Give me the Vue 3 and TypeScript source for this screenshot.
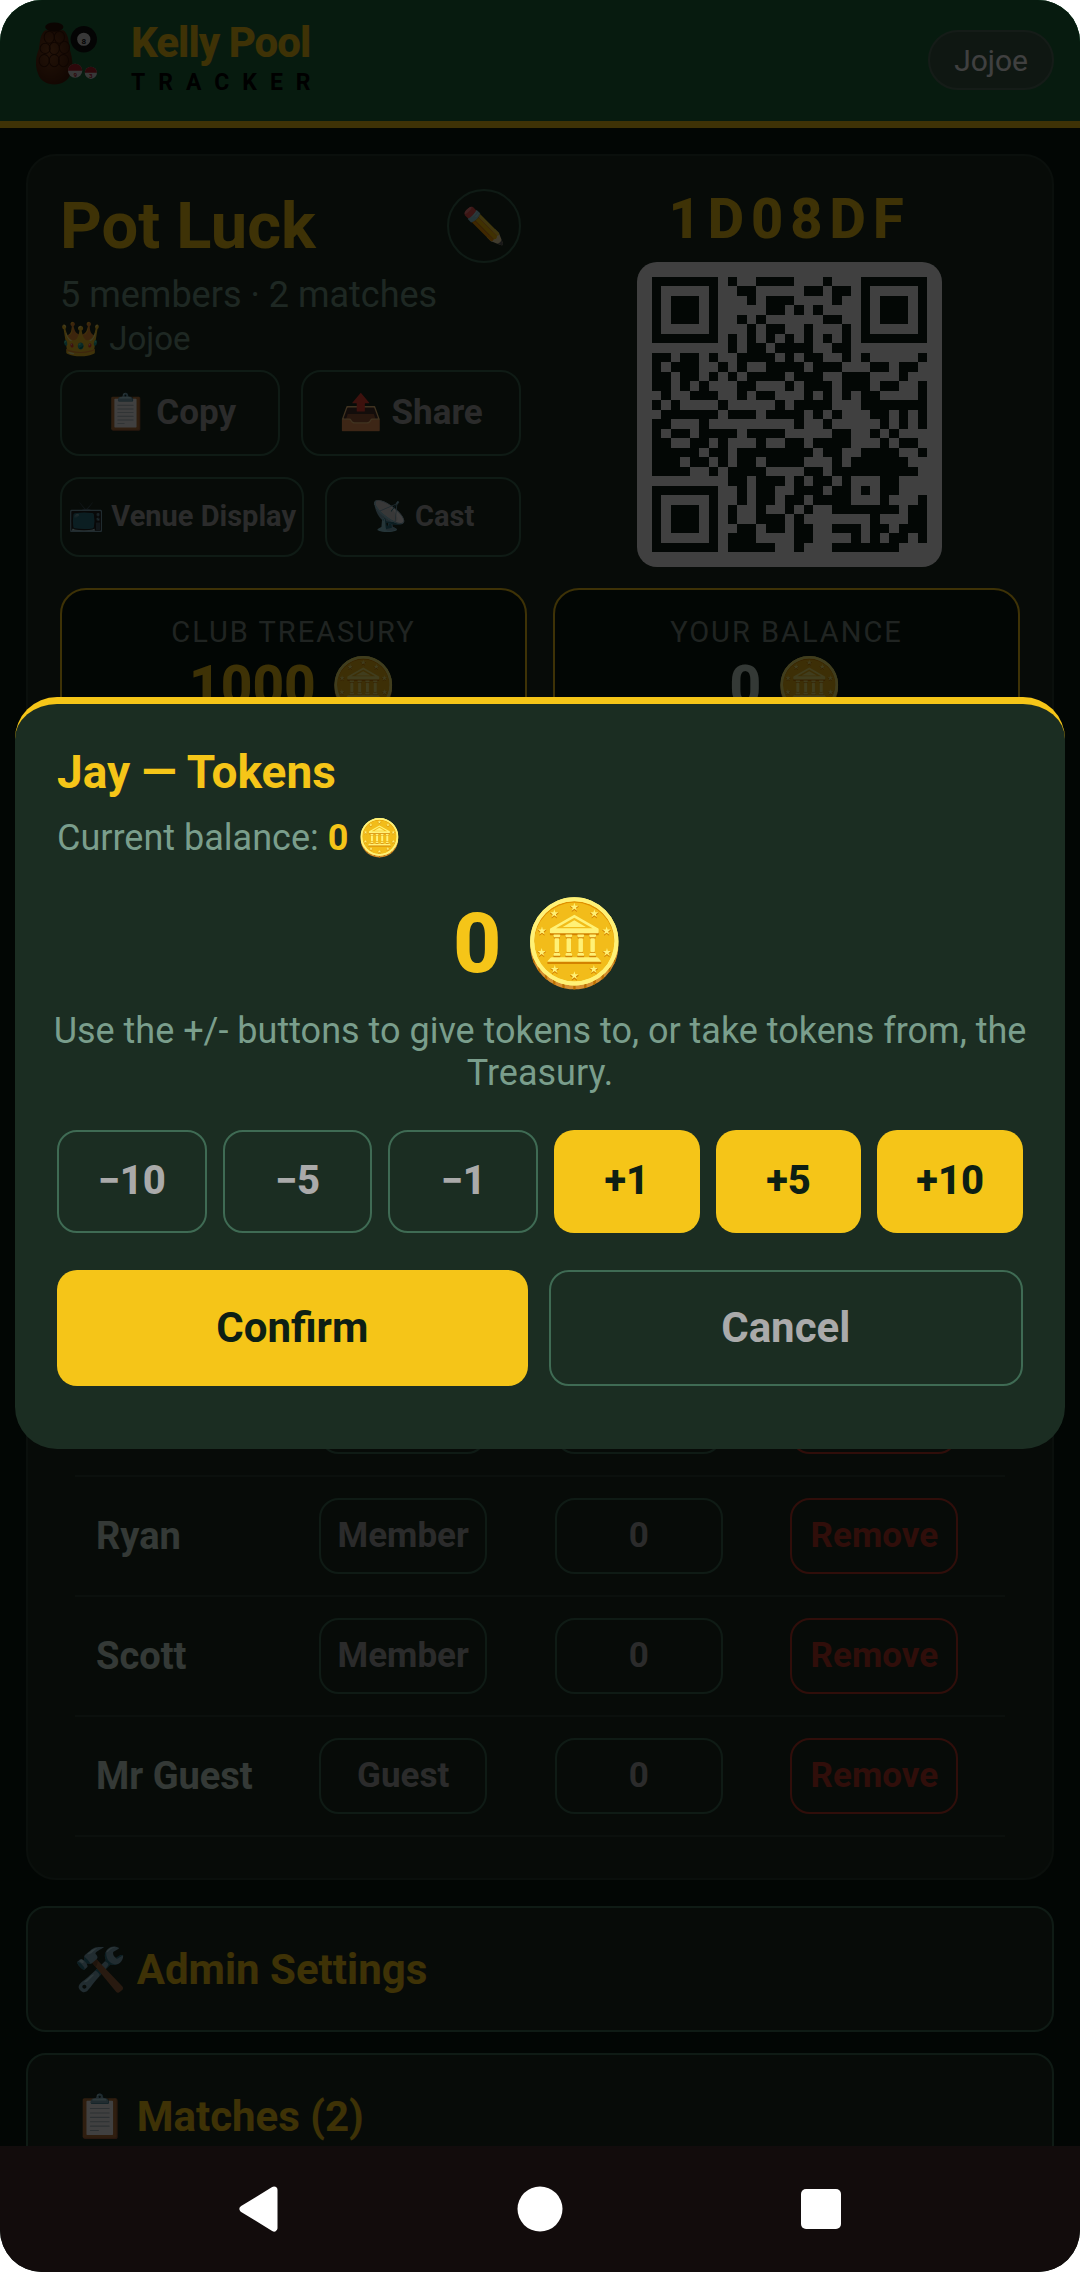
<script setup lang="ts">
import { computed, ref } from 'vue'

interface Member {
  name: string
  role: string
  tokens: number
}

const members: Member[] = [
  { name: 'Jay', role: 'Member', tokens: 0 },
  { name: 'Ryan', role: 'Member', tokens: 0 },
  { name: 'Scott', role: 'Member', tokens: 0 },
  { name: 'Mr Guest', role: 'Guest', tokens: 0 },
]

const balance = ref(0)
const change = ref(0)
const steps = [-10, -5, -1, 1, 5, 10]
const label = (n: number): string => (n < 0 ? `−${-n}` : `+${n}`)

// Dark modules of the join code, one entry per row, as column runs.
const qrRows: string[] = [
  '8 11-14 18', '9-10 16-17 19-20', '10 12-14 19', '12-13 15 17', '9 11 18-19',
  '10 12-13 16 20', '8 10 12 14 16 18 20', '8 10-11 13-16 19-20',
  '0-1 3-4 6 9-12 14 16-17 20 22 28', '0 2-4 7 9 12-15 17-19 23-24 26-27',
  '0-1 3-4 6 8 10-13 15-17 20-22 26', '0-1 3 5 9-10 14 16-18 20-22 24-25 28',
  '1 4-6 9 11-12 16 18 20 22-23 28', '0 2 7 13 15-18 22-28',
  '1-6 8-10 12-15 17 19 23-24 26 28', '0-1 5 15 18 24 26 28',
  '0 2-3 5-8 10-13 19-20 23 25', '0-1 4-5 7 11 14-15 17-20 24 26-27',
  '0-4 6-7 9-16 18-19 22-25 28', '0-2 4-5 7 9-10 12-15 19 21-26',
  '0-3 6 8-11 16-17 19-27', '8-9 11-13 15 17-18 20 24-25',
  '9 11-12 15-17 19-20 22 24-25', '9 11-12 14-15 17-20 24 28',
  '8 11 14 16 19-25 27-28', '8 11-13 15 23 27-28', '9-10 12-13 15-16 19-21 23-24 26-28',
  '8-10 15-16 21 23 25-26 28', '8-12 15 19-25',
]
const qrPath = computed(() =>
  qrRows
    .flatMap((row, y) =>
      row.split(' ').map((run) => {
        const [from, to = from] = run.split('-').map(Number)
        const width = to - from + 1
        return `M${from} ${y}h${width}v1h-${width}z`
      }),
    )
    .join(''),
)
const finders = [[0, 0], [22, 0], [0, 22]]
</script>

<template>
  <div class="screen">
    <div class="viewport">
      <header class="topbar">
        <div class="brand">
          <svg class="logo" viewBox="0 0 60 63" aria-hidden="true">
            <defs>
              <radialGradient id="gourd" cx=".4" cy=".4" r=".65">
                <stop offset="0" stop-color="#8a4a20" />
                <stop offset="1" stop-color="#4a1c08" />
              </radialGradient>
            </defs>
            <path d="M9 8C4 12 4 18 3 26C-1 35-1 44 2 51C6 65 30 65 34 51C37 43 36 36 33 26C32 18 32 12 27 8z" fill="url(#gourd)" />
            <ellipse cx="18" cy="5" rx="9" ry="4.500" fill="#2c1006" />
            <g fill="none" stroke="#3e1606">
              <ellipse cx="13" cy="15" rx="5" ry="6" /><ellipse cx="23" cy="15" rx="5" ry="6" />
              <ellipse cx="9" cy="26" rx="5" ry="5" /><ellipse cx="18" cy="26" rx="5" ry="6" /><ellipse cx="28" cy="25" rx="5" ry="6" />
              <ellipse cx="8" cy="38" rx="5" ry="6" /><ellipse cx="18" cy="38" rx="5" ry="6" /><ellipse cx="27" cy="38" rx="5" ry="6" />
            </g>
            <circle cx="47" cy="17" r="13" fill="#111" />
            <circle cx="47" cy="17" r="6.500" fill="#ddd" />
            <text x="47" y="22" text-anchor="middle" font-size="8" font-weight="700" fill="#111">8</text>
            <circle cx="38.500" cy="48" r="7" fill="#ddd" /><path d="M31.500 48a7 7 0 0 1 14 0z" fill="#b3202c" />
            <circle cx="54" cy="50" r="6" fill="#ddd" /><path d="M48 50a6 6 0 0 1 12 0z" fill="#b3202c" />
            <text x="38.500" y="54" text-anchor="middle" font-size="6" font-weight="700" fill="#b3202c">9</text>
            <text x="54" y="55" text-anchor="middle" font-size="6" font-weight="700" fill="#b3202c">3</text>
          </svg>
          <div class="wordmark">
            <span class="brand-name">Kelly Pool</span>
            <span class="brand-sub">TRACKER</span>
          </div>
        </div>
        <button class="user">Jojoe</button>
      </header>

      <main class="content">
        <section class="card">
          <div class="club">
            <div class="club-info">
              <div class="club-head">
                <h1>Pot Luck</h1>
                <button class="edit" aria-label="Edit">✏️</button>
              </div>
              <p class="stats">5 members · 2 matches</p>
              <p class="owner">👑 Jojoe</p>
              <div class="actions">
                <button class="outline">📋 Copy</button>
                <button class="outline">📤 Share</button>
              </div>
              <div class="actions small">
                <button class="outline venue">📺 Venue Display</button>
                <button class="outline cast">📡 Cast</button>
              </div>
            </div>
            <div class="join">
              <p class="code">1D08DF</p>
              <div class="qr">
                <svg viewBox="0 0 29 29" shape-rendering="crispEdges" role="img">
                  <g v-for="([x, y], i) in finders" :key="i" fill="#0d1f14">
                    <path :d="`M${x} ${y}h7v7h-7zM${x + 1} ${y + 1}v5h5v-5z`" fill-rule="evenodd" />
                    <rect :x="x + 2" :y="y + 2" width="3" height="3" />
                  </g>
                  <path :d="qrPath" fill="#0d1f14" />
                </svg>
              </div>
            </div>
          </div>

          <div class="tiles">
            <div class="tile">
              <span class="tile-label">CLUB TREASURY</span>
              <span class="tile-value gold">1000 🪙</span>
            </div>
            <div class="tile">
              <span class="tile-label">YOUR BALANCE</span>
              <span class="tile-value">0 🪙</span>
            </div>
          </div>

          <table class="members">
            <tbody>
              <tr v-for="m in members" :key="m.name">
                <th scope="row">{{ m.name }}</th>
                <td><button class="outline cell">{{ m.role }}</button></td>
                <td><button class="outline cell">{{ m.tokens }}</button></td>
                <td><button class="outline cell danger">Remove</button></td>
              </tr>
            </tbody>
          </table>
        </section>

        <button class="fold">🛠️ Admin Settings</button>
        <button class="fold">📋 Matches (2)</button>
      </main>

      <div class="overlay">
        <div class="modal" role="dialog" aria-modal="true" aria-labelledby="dlg">
          <h2 id="dlg">Jay — Tokens</h2>
          <p class="current">Current balance: <b>{{ balance }}</b> 🪙</p>
          <p class="amount">{{ change }} 🪙</p>
          <p class="hint">Use the +/- buttons to give tokens to, or take tokens from, the Treasury.</p>
          <div class="steps">
            <button
              v-for="s in steps"
              :key="s"
              :class="['step', s < 0 ? 'ghost' : 'solid']"
              @click="change += s"
            >{{ label(s) }}</button>
          </div>
          <div class="confirm">
            <button class="solid">Confirm</button>
            <button class="ghost">Cancel</button>
          </div>
        </div>
      </div>
    </div>

    <nav class="sysnav">
      <button aria-label="Back">
        <svg viewBox="0 0 46 46"><path d="M38 4L7 23L38 42z" fill="#fff" stroke="#fff" stroke-width="7" stroke-linejoin="round" /></svg>
      </button>
      <button aria-label="Home">
        <svg viewBox="0 0 46 46"><circle cx="23" cy="23" r="22.500" fill="#fff" /></svg>
      </button>
      <button aria-label="Recent apps">
        <svg viewBox="0 0 46 46"><rect x="3" y="3" width="40" height="40" rx="5" fill="#fff" /></svg>
      </button>
    </nav>
  </div>
</template>

<style>
body {
  background: #fff;
}
</style>

<style scoped>
* {
  box-sizing: border-box;
}
h1, h2, p {
  margin: 0;
}
button {
  font: inherit;
  color: inherit;
  background: none;
  border: 0;
  padding: 0;
  cursor: pointer;
}
svg {
  display: block;
}
.screen {
  height: 100vh;
  display: flex;
  flex-direction: column;
  overflow: hidden;
  border-radius: 42px;
  background: #0a1a10;
  color: #d0e4d8;
  font-family: Roboto, "Noto Color Emoji", sans-serif;
}
.viewport {
  position: relative;
  flex: 1;
  min-height: 0;
  overflow: hidden;
}

.topbar {
  display: flex;
  align-items: flex-start;
  justify-content: space-between;
  height: 128px;
  padding: 20px 26px 0 36px;
  border-bottom: 7px solid #f5c518;
  background: #1e6c3e;
}
.brand {
  display: flex;
  gap: 34px;
}
.logo {
  width: 61px;
  height: 64px;
  margin-top: 2px;
}
.wordmark {
  display: flex;
  flex-direction: column;
}
.brand-name {
  font-size: 42px;
  line-height: 46px;
  font-weight: 800;
  letter-spacing: -1px;
  color: #f5c518;
}
.brand-sub {
  font-size: 23px;
  line-height: 34px;
  font-weight: 700;
  letter-spacing: 13px;
  color: #000;
}
.user {
  height: 60px;
  margin-top: 10px;
  padding: 0 24px;
  border: 2px solid #55705f;
  border-radius: 30px;
  background: #3c5c48;
  color: #fff;
  font-size: 30px;
}

.content {
  padding: 26px;
}
.card {
  padding: 33px 32px 41px;
  border: 2px solid #2a3c30;
  border-radius: 30px;
  background: #1c2e22;
}
.club {
  display: flex;
  gap: 38px;
}
.club-info,
.join {
  flex: 1 1 0;
  min-width: 0;
}
.club-head {
  display: flex;
  justify-content: space-between;
  align-items: center;
}
h1 {
  font-size: 65px;
  line-height: 74px;
  font-weight: 700;
  color: #f5c518;
}
.edit {
  width: 74px;
  height: 74px;
  border: 2px solid #3f6b54;
  border-radius: 50%;
  font-size: 35px;
}
.stats {
  margin-top: 11px;
  font-size: 36px;
  line-height: 42px;
  color: #7a9e8c;
}
.owner {
  margin: 1px 0 9px;
  font-size: 33px;
  line-height: 44px;
  color: #7a9e8c;
}
.actions {
  display: flex;
  gap: 21px;
}
.outline {
  padding-bottom: 2px;
  border: 2px solid #3f6b54;
  border-radius: 20px;
  color: #aaa;
  font-weight: 700;
  white-space: nowrap;
}
.actions .outline {
  flex: 1 1 0;
  min-width: 0;
  height: 86px;
  font-size: 35px;
}
.actions.small {
  margin-top: 21px;
}
.actions.small .outline {
  height: 80px;
  font-size: 29px;
}
.actions.small .venue {
  flex-grow: 5;
}
.actions.small .cast {
  flex-grow: 4;
}
.join {
  display: flex;
  flex-direction: column;
  align-items: center;
}
.code {
  font-size: 56px;
  line-height: 60px;
  font-weight: 800;
  letter-spacing: 7px;
  color: #f5c518;
}
.qr {
  width: 305px;
  margin-top: 13px;
  padding: 15px;
  border-radius: 20px;
  background: #fff;
}
.tiles {
  display: flex;
  gap: 26px;
  margin-top: 21px;
}
.tile {
  flex: 1 1 0;
  display: flex;
  flex-direction: column;
  align-items: center;
  gap: 5px;
  padding: 24px;
  border: 2px solid #f5c518;
  border-radius: 26px;
  background: #0a1a10;
}
.tile-label {
  font-size: 29px;
  line-height: 36px;
  letter-spacing: 2px;
  color: #7f8f86;
}
.tile-value {
  font-size: 55px;
  line-height: 62px;
  font-weight: 800;
}
.tile-value.gold {
  color: #f5c518;
}

.members {
  width: calc(100% - 30px);
  margin: 614px 15px 0;
  border-collapse: separate;
  border-spacing: 0;
  table-layout: fixed;
}
.members th {
  width: 24%;
  text-align: left;
  font-size: 38px;
  font-weight: 700;
  line-height: 42px;
  white-space: nowrap;
}
.members th,
.members td {
  padding: 21px;
  border-bottom: 2px solid #2d4235;
}
.cell {
  display: block;
  width: 168px;
  height: 76px;
  font-size: 35px;
}
.danger {
  border-color: #c0392b;
  color: #c0392b;
}
.fold {
  display: block;
  width: 100%;
  height: 126px;
  margin-top: 21px;
  padding: 0 46px;
  border: 2px solid #3f6b54;
  border-radius: 20px;
  background: #1c2e22;
  color: #f5c518;
  font-size: 42px;
  font-weight: 700;
  text-align: left;
}
.card + .fold {
  margin-top: 26px;
}

.overlay {
  position: absolute;
  inset: 0;
  display: flex;
  align-items: center;
  justify-content: center;
  padding: 15px;
  background: rgba(0, 0, 0, 0.75);
}
.modal {
  width: 100%;
  padding: 41px 42px 63px;
  border-top: 7px solid #f5c518;
  border-radius: 42px;
  background: #1b2d22;
}
h2 {
  font-size: 46px;
  line-height: 54px;
  font-weight: 700;
  color: #f5c518;
}
.current {
  margin-top: 18px;
  font-size: 36px;
  line-height: 42px;
  color: #7a9e8c;
}
.current b {
  color: #f5c518;
}
.amount {
  margin-top: 35px;
  font-size: 84px;
  line-height: 100px;
  font-weight: 800;
  text-align: center;
  color: #f5c518;
}
.hint {
  margin: 16px -8px 0;
  font-size: 36px;
  line-height: 42px;
  text-align: center;
  color: #7a9e8c;
}
.steps {
  display: flex;
  gap: 16px;
  margin-top: 36px;
}
.confirm {
  display: flex;
  gap: 21px;
  margin-top: 37px;
}
.solid,
.ghost {
  flex: 1 1 0;
  padding-bottom: 2px;
  border-radius: 20px;
  font-weight: 700;
}
.solid {
  background: #f5c518;
  color: #0d1f14;
}
.ghost {
  border: 2px solid #3f6b54;
  color: #aaa;
}
.step {
  height: 103px;
  font-size: 40px;
  font-weight: 800;
}
.confirm button {
  height: 116px;
  font-size: 42px;
}

.sysnav {
  display: flex;
  justify-content: center;
  gap: 235px;
  height: 126px;
  background: #120c0c;
}
.sysnav button {
  width: 46px;
}
.sysnav svg {
  width: 46px;
  height: 46px;
}
</style>
